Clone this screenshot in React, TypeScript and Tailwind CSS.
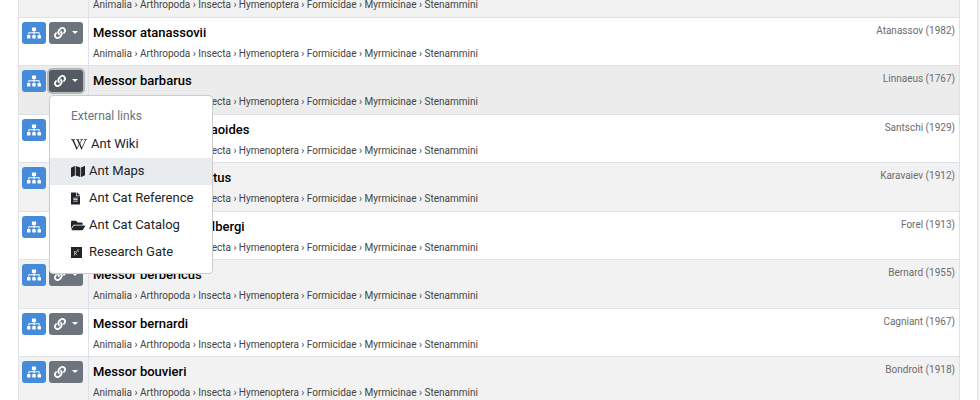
import React from "react";
import clsx from "clsx";
import {
  FaFileAlt,
  FaFolderOpen,
  FaLink,
  FaMap,
  FaResearchgate,
  FaSitemap,
  FaWikipediaW,
} from "react-icons/fa";

const lineage = "Animalia › Arthropoda › Insecta › Hymenoptera › Formicidae › Myrmicinae › Stenammini";

const species = [
  { name: "Messor atanassovii", author: "Atanassov (1982)" },
  { name: "Messor barbarus", author: "Linnaeus (1767)", open: true },
  { name: "Messor barbarus frilaoides", author: "Santschi (1929)" },
  { name: "Messor barbarus cratus", author: "Karavaiev (1912)" },
  { name: "Messor barbarus vihlbergi", author: "Forel (1913)" },
  { name: "Messor berbericus", author: "Bernard (1955)" },
  { name: "Messor bernardi", author: "Cagniant (1967)" },
  { name: "Messor bouvieri", author: "Bondroit (1918)" },
];

const links = [
  { label: "Ant Wiki", icon: FaWikipediaW, size: "w-4" },
  { label: "Ant Maps", icon: FaMap, size: "w-[14px]", active: true },
  { label: "Ant Cat Reference", icon: FaFileAlt, size: "w-[9px]" },
  { label: "Ant Cat Catalog", icon: FaFolderOpen, size: "w-[14px]" },
  { label: "Research Gate", icon: FaResearchgate, size: "w-[11px]" },
];

function LinksMenu() {
  return (
    <div className="absolute left-0 top-full z-10 mt-[3px] w-[164px] rounded border border-[#cccccc] bg-white pt-[10px] pb-[7px]">
      <h6 className="px-[21px] pb-[5px] text-[12px] leading-5 text-[#6c757d]">External links</h6>
      {links.map(({ label, icon: Icon, size, active }) => (
        <a
          key={label}
          href="#"
          className={clsx(
            "flex h-[27px] items-center gap-1 px-[21px] text-[13px] leading-5 whitespace-nowrap text-[#212529]",
            active && "bg-[#e9ecef]"
          )}
        >
          <span className="min-w-[14px]">
            <Icon className={clsx("h-[13px]", size)} />
          </span>
          {label}
        </a>
      ))}
    </div>
  );
}

export default function App() {
  return (
    <div className="h-screen overflow-hidden bg-[#f3f3f3] pr-[2px] font-['Roboto',sans-serif]">
      <main className="-mt-1 border-r border-[#e2e2e2] bg-white pr-[17px] pl-[18px]">
        <table className="w-full border-collapse border-x border-[#dee2e6]">
          <tbody>
            <tr className="h-[21px] bg-[#f2f2f2]">
              <td className="w-[70px] border-r border-[#dee2e6]" />
              <td className="px-1 pt-px align-top text-[10px] leading-4 text-[#444444]">{lineage}</td>
            </tr>
            {species.map((s) => (
              <tr
                key={s.name}
                className={clsx(
                  "h-12 border-t border-[#dee2e6] odd:h-[49px]",
                  s.open ? "bg-[#ececec]" : "odd:bg-[#f2f2f2]"
                )}
              >
                <td className="w-[70px] border-r border-[#dee2e6] px-[3px] pt-1 align-top">
                  <div className="flex gap-[3px]">
                    <button
                      type="button"
                      aria-label="Taxonomy"
                      className="flex h-[22px] w-6 items-center justify-center rounded-[3px] bg-[#458bd9] text-white"
                    >
                      <FaSitemap className="size-[14px]" />
                    </button>
                    <div className="relative">
                      <button
                        type="button"
                        aria-label="External links"
                        aria-expanded={!!s.open}
                        className={clsx(
                          "flex h-[22px] w-[34px] items-center gap-[6px] rounded-[3px] pl-[5px] text-white",
                          s.open ? "bg-[#545b62] ring-2 ring-[#b5b9bd]" : "bg-[#6c757d]"
                        )}
                      >
                        <FaLink className="size-[12px]" />
                        <span className="border-x-[3px] border-t-[3px] border-x-transparent border-t-white" />
                      </button>
                      {s.open && <LinksMenu />}
                    </div>
                  </div>
                </td>
                <td className="px-1 pt-[5px] align-top">
                  <div className="flex justify-between">
                    <span className="text-[13px] leading-5 font-medium text-black">{s.name}</span>
                    <span className="text-[10px] leading-4 text-[#6c6c6c]">{s.author}</span>
                  </div>
                  <div className="mt-[3px] text-[10px] leading-4 text-[#444444]">{lineage}</div>
                </td>
              </tr>
            ))}
          </tbody>
        </table>
      </main>
    </div>
  );
}
